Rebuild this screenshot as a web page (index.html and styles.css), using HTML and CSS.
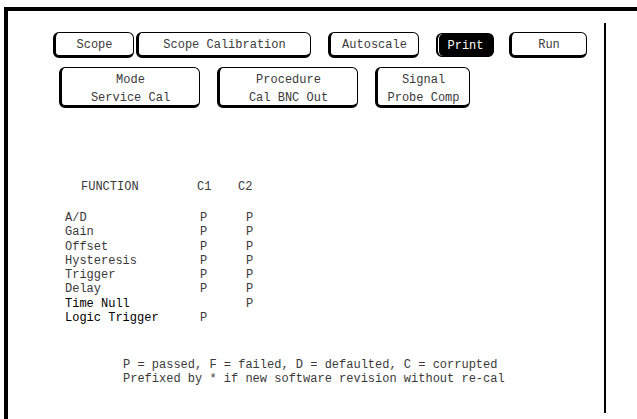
FILE: index.html
```html
<!DOCTYPE html>
<html>
<head>
<meta charset="utf-8">
<link rel="stylesheet" href="styles.css">
</head>
<body>
<div class="screen">
  <div class="panel">
    <div class="row row-top">
      <div class="btn b-scope">Scope</div>
      <div class="btn b-cal">Scope Calibration</div>
      <div class="btn b-auto">Autoscale</div>
      <div class="btn b-print">Print</div>
      <div class="btn b-run">Run</div>
    </div>
    <div class="row row-second">
      <div class="btn tall b-mode"><span>Mode</span><span>Service Cal</span></div>
      <div class="btn tall b-proc"><span>Procedure</span><span>Cal BNC Out</span></div>
      <div class="btn tall b-sig"><span>Signal</span><span>Probe Comp</span></div>
    </div>
    <div class="results">
      <div class="head">
        <span class="h-func">FUNCTION</span>
        <span class="h-c1">C1</span>
        <span class="h-c2">C2</span>
      </div>
      <div class="grid">
        <span>A/D</span><span>P</span><span>P</span>
        <span>Gain</span><span>P</span><span>P</span>
        <span>Offset</span><span>P</span><span>P</span>
        <span>Hysteresis</span><span>P</span><span>P</span>
        <span>Trigger</span><span>P</span><span>P</span>
        <span>Delay</span><span>P</span><span>P</span>
        <span class="strong">Time Null</span><span></span><span>P</span>
        <span class="strong">Logic Trigger</span><span>P</span><span></span>
      </div>
    </div>
    <div class="legend">
      <div class="line">P = passed, F = failed, D = defaulted, C = corrupted</div>
      <div class="line">Prefixed by * if new software revision without re-cal</div>
    </div>
  </div>
  <div class="rule"></div>
</div>
</body>
</html>
```

FILE: styles.css
```css
html, body {
  margin: 0;
  padding: 0;
  background: #fff;
}
body {
  width: 637px;
  height: 419px;
  overflow: hidden;
  font-family: "Liberation Mono", "DejaVu Sans Mono", monospace;
  font-size: 12px;
  color: #3a3a3a;
}
.screen {
  margin: 7px 0 0 4px;
  border-top: 4px solid #000;
  border-left: 4px solid #000;
  height: 408px;
  display: flex;
}
.panel {
  width: 596px;
  padding-top: 21px;
  box-sizing: border-box;
}
.rule {
  width: 2px;
  background: #000;
  margin-top: 12px;
  height: 390px;
}
.row {
  display: flex;
}
.row-top {
  margin-left: 45px;
  height: 26px;
}
.row-second {
  margin-left: 51px;
  margin-top: 9px;
  height: 41px;
}
.btn {
  box-sizing: border-box;
  border: 1px solid #000;
  border-left-width: 3px;
  border-bottom-width: 3px;
  border-radius: 6px;
  display: flex;
  align-items: center;
  justify-content: center;
  white-space: nowrap;
  height: 100%;
  padding-top: 2px;
}
.tall {
  flex-direction: column;
  line-height: 18px;
  padding-top: 5px;
}
.b-scope { width: 81px; }
.b-cal { width: 175px; margin-left: 2px; }
.b-auto { width: 91px; margin-left: 17px; }
.b-print {
  width: 58px;
  margin-left: 17px;
  background: #000;
  color: #fff;
  height: 24px;
  margin-top: 1px;
  box-shadow: inset 1px 0 0 #fff;
  border-left-width: 2px;
  border-bottom-width: 1px;
}
.b-run { width: 78px; margin-left: 15px; }
.b-mode { width: 141px; }
.b-proc { width: 141px; margin-left: 17px; }
.b-sig { width: 95px; margin-left: 17px; }

.results {
  margin-left: 57px;
  margin-top: 72px;
  line-height: 14.3px;
}
.head {
  display: flex;
  height: 14.3px;
}
.h-func { margin-left: 16px; width: 116px; }
.h-c1 { width: 41px; }
.grid {
  margin-top: 16.7px;
  display: grid;
  grid-template-columns: 135px 46px 20px;
  white-space: nowrap;
}
.strong {
  color: #000;
}
.legend {
  margin-left: 115px;
  margin-top: 33px;
  line-height: 14px;
}
.line {
  white-space: nowrap;
}
```
